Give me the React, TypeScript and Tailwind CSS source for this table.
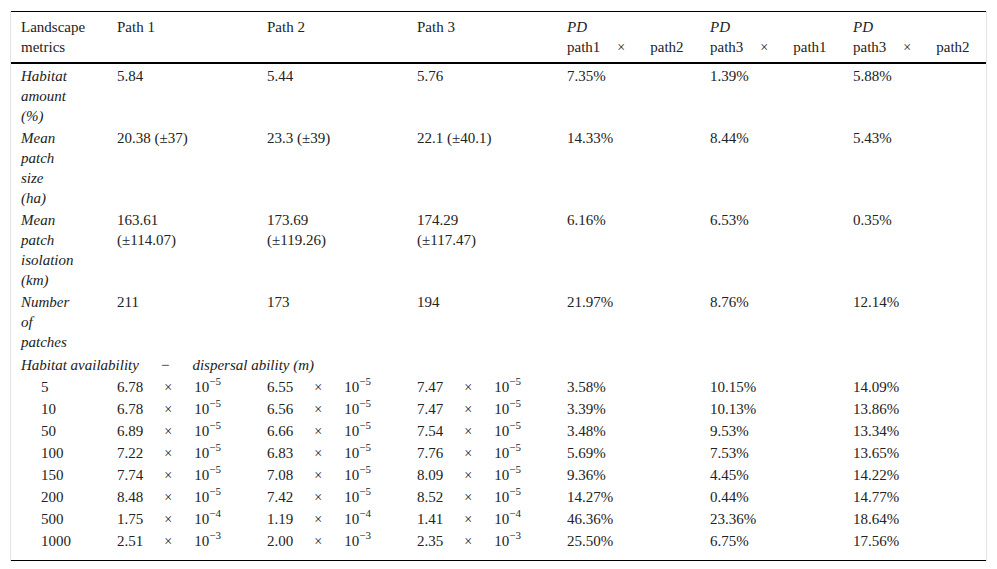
import React from "react";

const cols = "grid grid-cols-[96px_150px_150px_150px_143px_143px_143px]";

function Sci({ m, e }: { m: string; e: string }) {
  return (
    <span className="whitespace-nowrap">
      {m}
      <span className="ml-[21px] mr-[22px] text-[14px] leading-[0]">×</span>
      10<sup className="text-[11px] leading-[0] top-[-0.6em]">−{e}</sup>
    </span>
  );
}

function Pair({ a, b }: { a: string; b: string }) {
  return (
    <span className="whitespace-nowrap">
      {a}
      <span className="ml-[17px] mr-[25px] text-[14px] leading-[0]">×</span>
      {b}
    </span>
  );
}

const top = [
  {
    label: ["Habitat", "amount", "(%)"],
    v: ["5.84", "5.44", "5.76", "7.35%", "1.39%", "5.88%"],
  },
  {
    label: ["Mean", "patch", "size", "(ha)"],
    v: ["20.38 (±37)", "23.3 (±39)", "22.1 (±40.1)", "14.33%", "8.44%", "5.43%"],
  },
  {
    label: ["Mean", "patch", "isolation", "(km)"],
    v: ["163.61\n(±114.07)", "173.69\n(±119.26)", "174.29\n(±117.47)", "6.16%", "6.53%", "0.35%"],
  },
  {
    label: ["Number", "of", "patches"],
    v: ["211", "173", "194", "21.97%", "8.76%", "12.14%"],
  },
];

const sub: { d: string; p: [string, string][]; pd: string[] }[] = [
  { d: "5", p: [["6.78", "5"], ["6.55", "5"], ["7.47", "5"]], pd: ["3.58%", "10.15%", "14.09%"] },
  { d: "10", p: [["6.78", "5"], ["6.56", "5"], ["7.47", "5"]], pd: ["3.39%", "10.13%", "13.86%"] },
  { d: "50", p: [["6.89", "5"], ["6.66", "5"], ["7.54", "5"]], pd: ["3.48%", "9.53%", "13.34%"] },
  { d: "100", p: [["7.22", "5"], ["6.83", "5"], ["7.76", "5"]], pd: ["5.69%", "7.53%", "13.65%"] },
  { d: "150", p: [["7.74", "5"], ["7.08", "5"], ["8.09", "5"]], pd: ["9.36%", "4.45%", "14.22%"] },
  { d: "200", p: [["8.48", "5"], ["7.42", "5"], ["8.52", "5"]], pd: ["14.27%", "0.44%", "14.77%"] },
  { d: "500", p: [["1.75", "4"], ["1.19", "4"], ["1.41", "4"]], pd: ["46.36%", "23.36%", "18.64%"] },
  { d: "1000", p: [["2.51", "3"], ["2.00", "3"], ["2.35", "3"]], pd: ["25.50%", "6.75%", "17.56%"] },
];

export default function App() {
  return (
    <div className="w-[997px] h-[569px] bg-white pt-[11px] pl-[10px] text-[15px] leading-[20px] text-[#222] font-['Liberation_Serif',serif]">
      <div className="w-[977px] border-x border-[#e3e3e3]">
        <div className="border-t border-black border-b-2">
          <div className={`${cols} pt-[5px] pb-[5px]`}>
            <div className="pl-[10px]">
              Landscape
              <br />
              metrics
            </div>
            <div className="pl-[10px]">Path 1</div>
            <div className="pl-[10px]">Path 2</div>
            <div className="pl-[10px]">Path 3</div>
            <div className="pl-[10px]">
              <i>PD</i>
              <br />
              <Pair a="path1" b="path2" />
            </div>
            <div className="pl-[10px]">
              <i>PD</i>
              <br />
              <Pair a="path3" b="path1" />
            </div>
            <div className="pl-[10px]">
              <i>PD</i>
              <br />
              <Pair a="path3" b="path2" />
            </div>
          </div>
        </div>
        <div className="border-b border-black pb-[9px]">
          {top.map((r, i) => (
            <div key={i} className={`${cols} pt-[2px]`}>
              <div className="pl-[10px] italic">
                {r.label.map((l, j) => (
                  <div key={j}>{l}</div>
                ))}
              </div>
              {r.v.map((v, j) => (
                <div key={j} className="pl-[10px] whitespace-pre-line">
                  {v}
                </div>
              ))}
            </div>
          ))}
          <div className="pt-[3px] pl-[10px] italic whitespace-nowrap">
            Habitat availability
            <span className="not-italic ml-[22px] mr-[23px]">−</span>
            dispersal ability (m)
          </div>
          {sub.map((r, i) => (
            <div key={i} className={`${cols} pt-[2px] h-[22px]`}>
              <div className="pl-[30px]">{r.d}</div>
              {r.p.map((p, j) => (
                <div key={j} className="pl-[10px]">
                  <Sci m={p[0]} e={p[1]} />
                </div>
              ))}
              {r.pd.map((v, j) => (
                <div key={j} className="pl-[10px]">
                  {v}
                </div>
              ))}
            </div>
          ))}
        </div>
      </div>
    </div>
  );
}
